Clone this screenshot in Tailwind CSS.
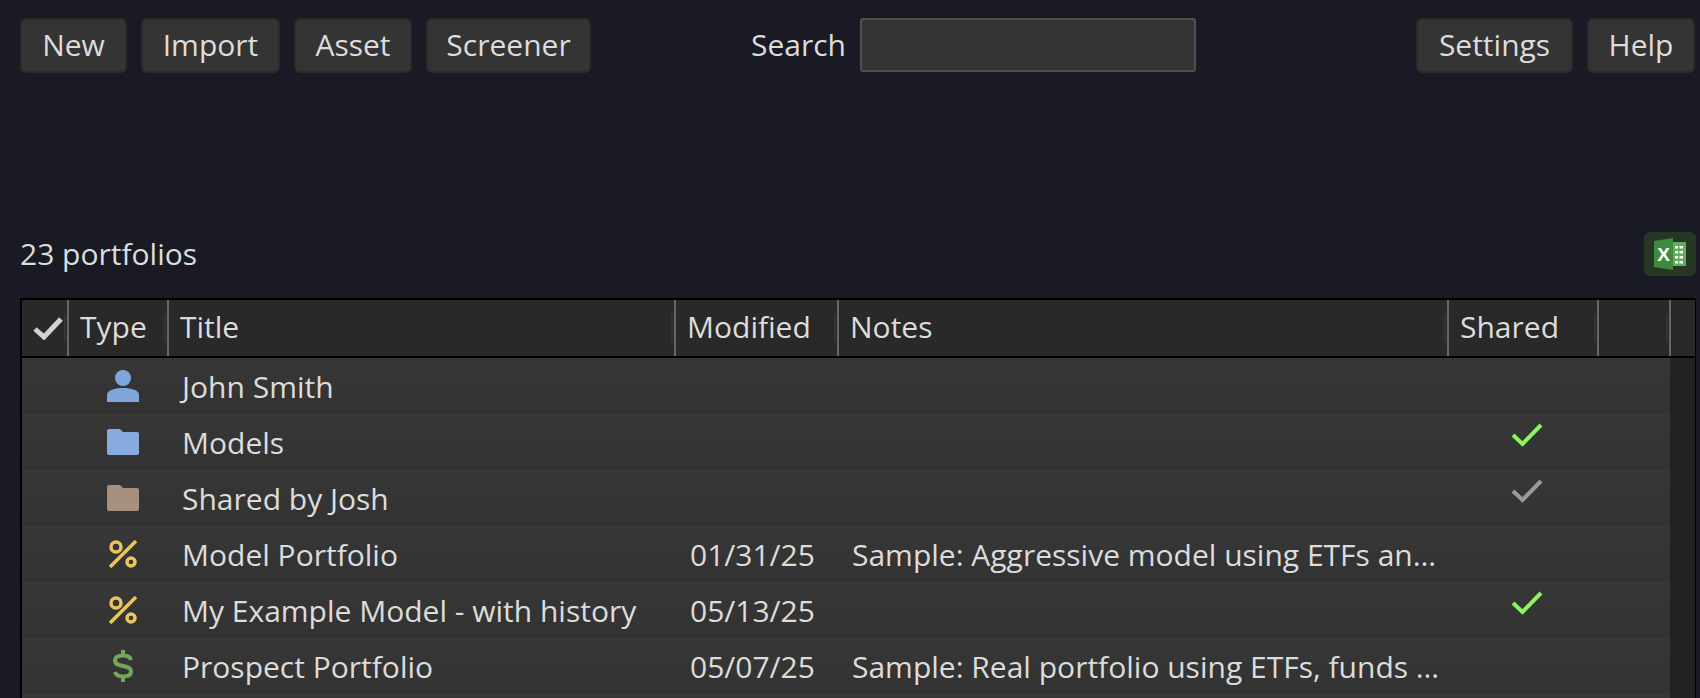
<!DOCTYPE html>
<html lang="en">
<head>
<meta charset="UTF-8">
<meta name="viewport" content="width=device-width, initial-scale=1.0">
<title>Portfolios</title>
<script src="https://cdn.jsdelivr.net/npm/@tailwindcss/browser@4"></script>
</head>
<body class="h-[698px] overflow-hidden bg-[#191a24] font-['Open_Sans',sans-serif] text-[30px] text-[#dcdcdc] antialiased">

	<!-- toolbar -->
	<div class="flex items-center pl-5 pr-[5px] pt-[18px]">
		<div class="flex gap-[14px]">
			<button class="h-[55px] w-[107px] rounded-md border-2 border-[#2b2b2b] bg-[#343434] pb-[3px]">New</button>
			<button class="h-[55px] w-[139px] rounded-md border-2 border-[#2b2b2b] bg-[#343434] pb-[3px]">Import</button>
			<button class="h-[55px] w-[118px] rounded-md border-2 border-[#2b2b2b] bg-[#343434] pb-[3px]">Asset</button>
			<button class="h-[55px] w-[165px] rounded-md border-2 border-[#2b2b2b] bg-[#343434] pb-[3px]">Screener</button>
		</div>
		<label class="ml-[160px] w-[109px] pb-[3px]">Search</label>
		<input type="text" class="h-[54px] w-[336px] -translate-y-px rounded-[3px] border-2 border-[#4f4f4f] bg-[#343434]">
		<div class="ml-auto flex gap-[14px]">
			<button class="h-[55px] w-[157px] rounded-md border-2 border-[#2b2b2b] bg-[#343434] pb-[3px]">Settings</button>
			<button class="h-[55px] w-[108px] rounded-md border-2 border-[#2b2b2b] bg-[#343434] pb-[3px]">Help</button>
		</div>
	</div>

	<!-- count row -->
	<div class="mt-[159px] flex items-center justify-between pl-5 pr-1">
		<div class="leading-[44px]">23 portfolios</div>
		<button class="flex h-[44px] w-[52px] items-center justify-center rounded-md bg-[#263723]">
			<svg width="32" height="32" viewBox="0 0 32 32">
				<rect x="17" y="4" width="15" height="24" fill="#62ad5d"/>
				<path d="M0 3 L19 0 V32 L0 29 Z" fill="#3f8a3f"/>
				<text x="9.5" y="22.5" text-anchor="middle" font-family="Liberation Sans" font-weight="700" font-size="19" fill="#fff">X</text>
				<path d="M21 8h3v2.500h-3zM25.500 8h3.500v2.500h-3.500zM21 13h3v2.500h-3zM25.500 13h3.500v2.500h-3.500zM21 18h3v2.500h-3zM25.500 18h3.500v2.500h-3.500zM21 23h3v2.500h-3zM25.500 23h3.500v2.500h-3.500z" fill="#fff"/>
			</svg>
		</button>
	</div>

	<!-- table -->
	<div class="ml-5 mt-[22px] w-[1676px] border-y-2 border-l-2 border-r border-black">
		<div class="grid h-[58px] grid-cols-[45px_100px_507px_163px_610px_150px_72px_26px] border-b-2 border-black bg-[#292929]">
			<div class="flex items-center justify-between pl-[11px] pr-px">
				<svg width="30" height="24" viewBox="0 0 30 24"><path d="M2 13 L11 21 L28 3" fill="none" stroke="#d2d2d2" stroke-width="5"/></svg>
				<span class="h-[28px] w-[2px] bg-[#353535]"></span>
			</div>
			<div class="flex items-center justify-between border-l-2 border-[#666] pl-[11px] pr-px"><span class="pb-[4px]">Type</span><span class="h-[28px] w-[2px] bg-[#353535]"></span></div>
			<div class="flex items-center justify-between border-l-2 border-[#666] pl-[11px] pr-px"><span class="pb-[4px]">Title</span><span class="h-[28px] w-[2px] bg-[#353535]"></span></div>
			<div class="flex items-center justify-between border-l-2 border-[#666] pl-[11px] pr-px"><span class="pb-[4px]">Modified</span><span class="h-[28px] w-[2px] bg-[#353535]"></span></div>
			<div class="flex items-center justify-between border-l-2 border-[#666] pl-[11px] pr-px"><span class="pb-[4px]">Notes</span><span class="h-[28px] w-[2px] bg-[#353535]"></span></div>
			<div class="flex items-center justify-between border-l-2 border-[#666] pl-[11px] pr-px"><span class="pb-[4px]">Shared</span><span class="h-[28px] w-[2px] bg-[#353535]"></span></div>
			<div class="flex items-center justify-end border-l-2 border-[#666] pr-px"><span class="h-[28px] w-[2px] bg-[#353535]"></span></div>
			<div class="border-l-2 border-[#666]"></div>
		</div>

		<div class="grid grid-cols-[1fr_25px]">
			<div>
				<div class="grid h-[56px] grid-cols-[45px_100px_507px_163px_610px_150px] items-center bg-gradient-to-b from-[#373737] to-[#323232]">
					<div></div>
					<div class="flex justify-center pl-[12px]">
						<svg width="32" height="32" viewBox="0 0 32 32" fill="#7fa6da"><circle cx="16" cy="8" r="8"/><path d="M0 32 V25 C0 20 8 18 16 18 S32 20 32 25 V32 Z"/></svg>
					</div>
					<div class="pl-[15px]">John Smith</div>
					<div></div><div></div><div></div>
				</div>
				<div class="grid h-[56px] grid-cols-[45px_100px_507px_163px_610px_150px] items-center bg-gradient-to-b from-[#373737] to-[#323232]">
					<div></div>
					<div class="flex justify-center pl-[12px]">
						<svg width="32" height="26" viewBox="0 0 32 26" fill="#88abdf"><path d="M0 2 Q0 0 2 0 H13 L16 3 H30 Q32 3 32 5 V24 Q32 26 30 26 H2 Q0 26 0 24 Z"/></svg>
					</div>
					<div class="pl-[15px]">Models</div>
					<div></div><div></div>
					<div class="flex justify-center self-start pt-[9px] pl-[10px]"><svg width="32" height="24" viewBox="0 0 32 24"><path d="M2 12 L11.500 21 L30 2" fill="none" stroke="#8cf45c" stroke-width="4"/></svg></div>
				</div>
				<div class="grid h-[56px] grid-cols-[45px_100px_507px_163px_610px_150px] items-center bg-gradient-to-b from-[#373737] to-[#323232]">
					<div></div>
					<div class="flex justify-center pl-[12px]">
						<svg width="32" height="26" viewBox="0 0 32 26" fill="#a6907f"><path d="M0 2 Q0 0 2 0 H13 L16 3 H30 Q32 3 32 5 V24 Q32 26 30 26 H2 Q0 26 0 24 Z"/></svg>
					</div>
					<div class="pl-[15px]">Shared by Josh</div>
					<div></div><div></div>
					<div class="flex justify-center self-start pt-[9px] pl-[10px]"><svg width="32" height="24" viewBox="0 0 32 24"><path d="M2 12 L11.500 21 L30 2" fill="none" stroke="#9a9a9a" stroke-width="4"/></svg></div>
				</div>
				<div class="grid h-[56px] grid-cols-[45px_100px_507px_163px_610px_150px] items-center bg-gradient-to-b from-[#373737] to-[#323232]">
					<div></div>
					<div class="flex justify-center pl-[12px]">
						<svg width="28" height="28" viewBox="0 0 28 28" fill="none" stroke="#e8c55f" stroke-width="3.500"><circle cx="7" cy="7" r="5"/><circle cx="22" cy="22" r="4"/><path d="M27 1 L1 27"/></svg>
					</div>
					<div class="pl-[15px]">Model Portfolio</div>
					<div class="pl-[16px]">01/31/25</div>
					<div class="whitespace-nowrap pl-[15px]">Sample: Aggressive model using ETFs an…</div>
					<div></div>
				</div>
				<div class="grid h-[56px] grid-cols-[45px_100px_507px_163px_610px_150px] items-center bg-gradient-to-b from-[#373737] to-[#323232]">
					<div></div>
					<div class="flex justify-center pl-[12px]">
						<svg width="28" height="28" viewBox="0 0 28 28" fill="none" stroke="#e8c55f" stroke-width="3.500"><circle cx="7" cy="7" r="5"/><circle cx="22" cy="22" r="4"/><path d="M27 1 L1 27"/></svg>
					</div>
					<div class="pl-[15px]">My Example Model - with history</div>
					<div class="pl-[16px]">05/13/25</div>
					<div></div>
					<div class="flex justify-center self-start pt-[9px] pl-[10px]"><svg width="32" height="24" viewBox="0 0 32 24"><path d="M2 12 L11.500 21 L30 2" fill="none" stroke="#8cf45c" stroke-width="4"/></svg></div>
				</div>
				<div class="grid h-[56px] grid-cols-[45px_100px_507px_163px_610px_150px] items-center bg-gradient-to-b from-[#373737] to-[#323232]">
					<div></div>
					<div class="flex justify-center pl-[12px]">
						<svg width="20" height="32" viewBox="0 0 20 32" fill="none" stroke="#74a65a" stroke-width="4"><path d="M18 10 C17 6 14 5.500 10 5.500 C5 5.500 2 7 2 10.500 C2 14 5 15 10 16 C15 17 18 18 18 21.500 C18 25 15 26.500 10 26.500 C6 26.500 3 25.500 2 22"/><path d="M10 0 V6 M10 26 V32"/></svg>
					</div>
					<div class="pl-[15px]">Prospect Portfolio</div>
					<div class="pl-[16px]">05/07/25</div>
					<div class="whitespace-nowrap pl-[15px]">Sample: Real portfolio using ETFs, funds …</div>
					<div></div>
				</div>
				<div class="h-[56px] bg-gradient-to-b from-[#373737] to-[#323232]"></div>
			</div>
			<div class="bg-[#222222]"></div>
		</div>
	</div>

</body>
</html>
